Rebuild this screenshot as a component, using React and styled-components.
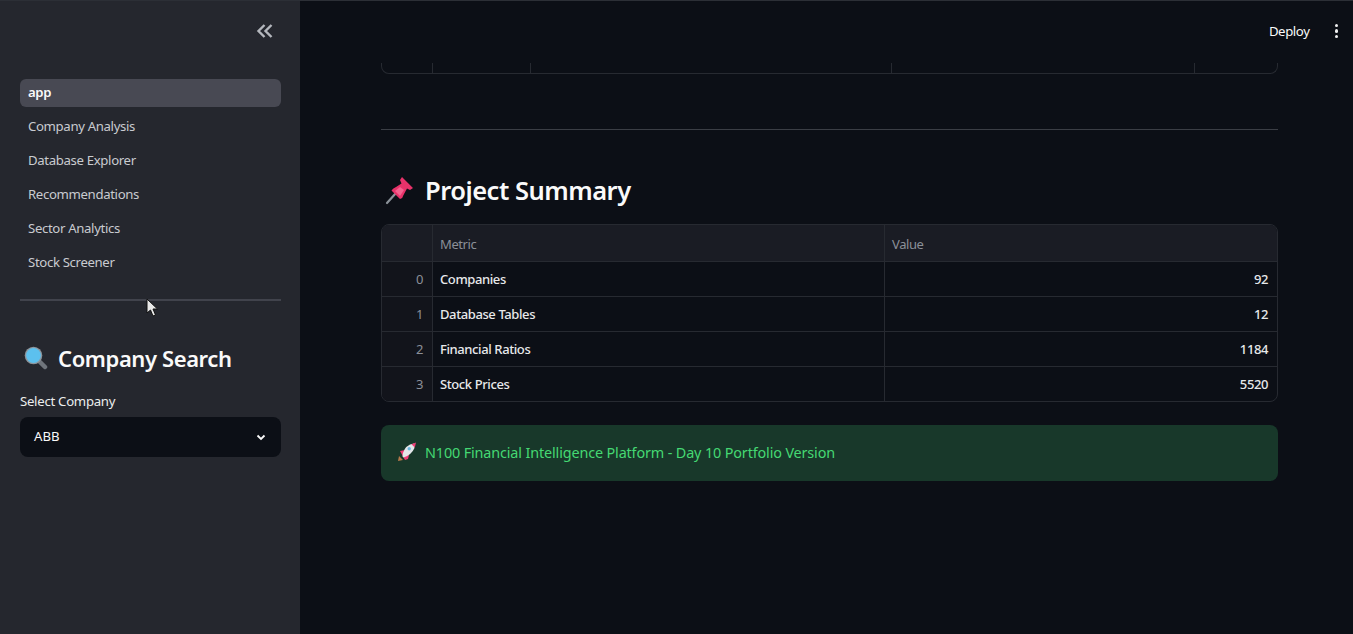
import styled, { createGlobalStyle } from 'styled-components';

const GlobalStyle = createGlobalStyle`
    html, body {
        margin: 0;
        padding: 0;
        height: 100%;
        overflow: hidden;
        background: #0c0f16;
    }
    body {
        font-family: "Noto Sans", "Open Sans", sans-serif;
        color: #fafafa;
    }
`;

const navItems = ['app', 'Company Analysis', 'Database Explorer', 'Recommendations', 'Sector Analytics', 'Stock Screener'];

const summaryRows = [
    { index: 0, metric: 'Companies', value: 92 },
    { index: 1, metric: 'Database Tables', value: 12 },
    { index: 2, metric: 'Financial Ratios', value: 1184 },
    { index: 3, metric: 'Stock Prices', value: 5520 },
];

function PinIcon() {
    return (
        <svg width="30" height="30" viewBox="0 0 30 30">
            <path d="M2 28 L11 18" stroke="#8b9299" strokeWidth="2.2" strokeLinecap="round" />
            <path d="M17 2 L28 13 L25 15 L22 13.5 L18.5 20 Q18 23 15 24 L6.5 15.5 Q8 13 11 12 L16.5 8.5 L15 5 Z" fill="#e8326a" />
            <path d="M10 16 L15 21 L19 15 L15 12 Z" fill="#f4638f" />
        </svg>
    );
}

function SearchIcon() {
    return (
        <svg width="24" height="24" viewBox="0 0 24 24">
            <path d="M16 16 L21 21" stroke="#70757c" strokeWidth="4.5" strokeLinecap="round" />
            <circle cx="9.5" cy="9.5" r="8.8" fill="#8d959c" />
            <circle cx="9.5" cy="9.5" r="7.4" fill="#5cc0ee" />
        </svg>
    );
}

function RocketIcon() {
    return (
        <svg width="22" height="22" viewBox="0 0 22 22">
            <path d="M2 20 L3 15 L7 19 Z" fill="#b5784a" />
            <path d="M4 10 L9 9 L13 14 L12 18 L9 19 Z" fill="#ef3f78" />
            <path d="M6.5 15.5 Q7 7 14 3.5 L18 2.5 L18.5 7 Q15.5 14 7.5 16.5 Z" fill="#e4e7ea" />
            <path d="M15.5 3.2 L20 1.5 L18.8 6.5 Z" fill="#ef3f78" />
            <circle cx="13.2" cy="7.8" r="1.7" fill="#6bb8e0" />
        </svg>
    );
}

function App() {
    return (
        <Page>
            <GlobalStyle />
            <Sidebar>
                <CollapseRow>
                    <svg width="18" height="18" viewBox="0 0 18 18" fill="none" stroke="#b4b7bd" strokeWidth="2.4">
                        <path d="M8.5 3 L2.5 9 L8.5 15" />
                        <path d="M15.5 3 L9.5 9 L15.5 15" />
                    </svg>
                </CollapseRow>
                <Nav>
                    {navItems.map((item, i) => (
                        <NavItem key={item} $active={i === 0}>{item}</NavItem>
                    ))}
                </Nav>
                <SideRule />
                <SideHeading>
                    <SearchIcon />
                    Company Search
                </SideHeading>
                <FieldLabel>Select Company</FieldLabel>
                <Select>
                    ABB
                    <svg width="12" height="12" viewBox="0 0 12 12" fill="none" stroke="#fafafa" strokeWidth="1.8">
                        <path d="M2.5 4.5 L6 8 L9.5 4.5" />
                    </svg>
                </Select>
            </Sidebar>
            <Main>
                <TopBar>
                    <DeployLabel>Deploy</DeployLabel>
                    <MenuDots>
                        <span /><span /><span />
                    </MenuDots>
                </TopBar>
                <TableTail>
                    <TailCell $w={51} />
                    <TailCell $w={98} />
                    <TailCell $w={361} />
                    <TailCell $w={303} />
                    <TailCell $w={83} />
                </TableTail>
                <MainRule />
                <MainHeading>
                    <PinIcon />
                    Project Summary
                </MainHeading>
                <Table>
                    <HeaderRow>
                        <IndexCell $header />
                        <TextCell $header>Metric</TextCell>
                        <TextCell $header>Value</TextCell>
                    </HeaderRow>
                    {summaryRows.map((row) => (
                        <BodyRow key={row.index}>
                            <IndexCell>{row.index}</IndexCell>
                            <TextCell>{row.metric}</TextCell>
                            <NumberCell>{row.value}</NumberCell>
                        </BodyRow>
                    ))}
                </Table>
                <SuccessBox>
                    <RocketIcon />
                    N100 Financial Intelligence Platform - Day 10 Portfolio Version
                </SuccessBox>
            </Main>
            <Cursor width="13" height="20" viewBox="0 0 13 20">
                <path d="M1 1 L1 15 L4.5 12 L7 18 L9.5 17 L7 11 L11.5 11 Z" fill="#e8e8e8" stroke="#111" strokeWidth="1" />
            </Cursor>
        </Page>
    );
}

const Page = styled.div`
    position: relative;
    display: flex;
    width: 1353px;
    height: 634px;
    overflow: hidden;
    border-top: 1px solid #2c2f36;
    box-sizing: border-box;
`;

const Sidebar = styled.aside`
    width: 300px;
    flex-shrink: 0;
    background: #25272e;
    padding: 0 19px 0 20px;
    box-sizing: border-box;
`;

const CollapseRow = styled.div`
    display: flex;
    justify-content: flex-end;
    height: 78px;
    padding-top: 21px;
    padding-right: 7px;
    box-sizing: border-box;
`;

const Nav = styled.nav`
    display: flex;
    flex-direction: column;
    gap: 6px;
`;

const NavItem = styled.div`
    height: 28px;
    line-height: 27px;
    padding: 0 8px;
    border-radius: 6px;
    font-size: 13.2px;
    letter-spacing: -0.35px;
    font-weight: ${(p) => (p.$active ? 600 : 400)};
    color: ${(p) => (p.$active ? '#fafafa' : '#c9cbd0')};
    background: ${(p) => (p.$active ? '#484953' : 'transparent')};
`;

const SideRule = styled.div`
    height: 2px;
    margin-top: 22px;
    background: #41434c;
`;

const SideHeading = styled.h2`
    display: flex;
    align-items: center;
    gap: 10px;
    margin: 41px 0 0 4px;
    height: 32px;
    font-size: 22px;
    letter-spacing: -0.4px;
    font-weight: 600;
    color: #fafafa;
`;

const FieldLabel = styled.div`
    margin-top: 17px;
    height: 20px;
    line-height: 20px;
    font-size: 13.2px;
    letter-spacing: -0.28px;
    color: #eceded;
`;

const Select = styled.div`
    display: flex;
    align-items: center;
    justify-content: space-between;
    height: 40px;
    margin-top: 6px;
    padding: 0 14px 2px 14px;
    border-radius: 8px;
    background: #0c0f16;
    font-size: 13.2px;
    color: #fafafa;
    box-sizing: border-box;
    svg {
        margin-top: 2px;
    }
`;

const Main = styled.main`
    flex: 1;
    padding: 0 75px 0 81px;
    background: #0c0f16;
`;

const TopBar = styled.div`
    position: absolute;
    top: 0;
    right: 0;
    display: flex;
    align-items: center;
    height: 60px;
    padding-right: 15px;
`;

const DeployLabel = styled.span`
    font-size: 13.2px;
    letter-spacing: -0.4px;
    color: #fafafa;
    margin-right: 25px;
`;

const MenuDots = styled.div`
    display: flex;
    flex-direction: column;
    gap: 2px;
    span {
        width: 3.5px;
        height: 3.5px;
        border-radius: 50%;
        background: #f0f0f0;
    }
`;

const TableTail = styled.div`
    display: flex;
    height: 73px;
    box-sizing: border-box;
    align-items: flex-end;
`;

const TailCell = styled.div`
    width: ${(p) => p.$w}px;
    height: 11px;
    box-sizing: border-box;
    border-bottom: 1px solid #272a31;
    border-right: 1px solid #272a31;
    &:first-child {
        border-left: 1px solid #272a31;
        border-bottom-left-radius: 8px;
        width: 52px;
    }
    &:last-child {
        border-bottom-right-radius: 8px;
        flex: 1;
    }
`;

const MainRule = styled.div`
    height: 1px;
    margin-top: 55px;
    background: #3b3e45;
`;

const MainHeading = styled.h2`
    display: flex;
    align-items: center;
    gap: 10px;
    margin: 45px 0 0 4px;
    height: 30px;
    font-size: 25.5px;
    letter-spacing: -0.5px;
    font-weight: 600;
    color: #fafafa;
`;

const Table = styled.div`
    margin-top: 19px;
    border: 1px solid #272a31;
    border-radius: 8px;
    overflow: hidden;
    font-size: 13px;
    letter-spacing: -0.4px;
`;

const HeaderRow = styled.div`
    display: grid;
    grid-template-columns: 51px 452px 1fr;
    height: 36px;
    background: #1a1c24;
    border-bottom: 1px solid #272a31;
    padding-top: 1px;
    margin-top: -1px;
`;

const BodyRow = styled.div`
    display: grid;
    grid-template-columns: 51px 452px 1fr;
    height: 34px;
    border-bottom: 1px solid #272a31;
    font-weight: 500;
    &:last-child {
        border-bottom: none;
    }
`;

const IndexCell = styled.div`
    display: flex;
    align-items: center;
    justify-content: flex-end;
    padding-right: 9px;
    border-right: 1px solid #272a31;
    color: #8b8f98;
    font-weight: 400;
    background: ${(p) => (p.$header ? '#1a1c24' : '#12141b')};
`;

const TextCell = styled.div`
    display: flex;
    align-items: center;
    padding: ${(p) => (p.$header ? '2px' : '0')} 7px 0;
    border-right: 1px solid #272a31;
    color: ${(p) => (p.$header ? '#8b8f98' : '#e8e9eb')};
    &:last-child {
        border-right: none;
    }
`;

const NumberCell = styled.div`
    display: flex;
    align-items: center;
    justify-content: flex-end;
    padding-right: 9px;
    color: #e8e9eb;
`;

const SuccessBox = styled.div`
    display: flex;
    align-items: center;
    gap: 7px;
    height: 56px;
    margin-top: 23px;
    padding: 0 16px 2px 15px;
    border-radius: 8px;
    background: #18382a;
    color: #45d873;
    font-size: 14.4px;
    letter-spacing: -0.14px;
    box-sizing: border-box;
`;

const Cursor = styled.svg`
    position: absolute;
    left: 146px;
    top: 297px;
`;

export default App;
